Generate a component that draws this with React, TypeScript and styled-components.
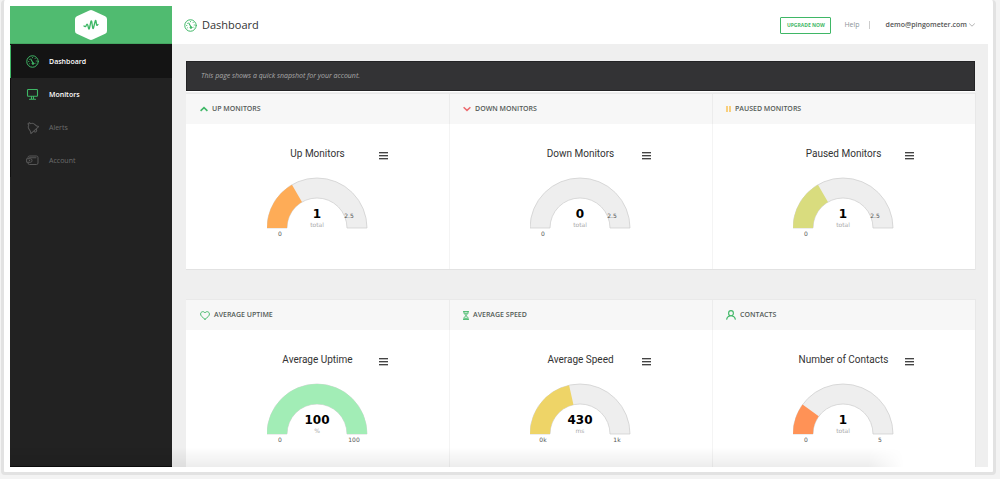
import React from "react";
import styled, { createGlobalStyle } from "styled-components";

const GlobalStyle = createGlobalStyle`
  *, *::before, *::after { box-sizing: border-box; }
  body {
    margin: 0;
    background: #f3f3f3;
    font-family: "Open Sans", "Noto Sans", sans-serif;
    color: #333;
  }
  h1, h2, h3, p, ul { margin: 0; padding: 0; }
  button { font-family: inherit; cursor: pointer; padding: 0; }
  a { color: inherit; text-decoration: none; }
`;

const green = "#3fb766";

const Page = styled.div`
  min-height: 100vh;
  display: flex;
  padding: 0 4px 4px 1px;
`;

const Frame = styled.div`
  flex: 1;
  display: flex;
  background: #fff;
  border: 3px solid #e2e2e2;
  border-top: 0;
  border-radius: 4px;
  padding: 6px 5px 5px 6px;
`;

const Shell = styled.div`
  flex: 1;
  display: flex;
  position: relative;
`;

const BottomShade = styled.div`
  position: absolute;
  left: 0;
  right: 84px;
  bottom: 0;
  height: 20px;
  background: linear-gradient(rgba(0, 0, 0, 0), rgba(0, 0, 0, 0.07));
  mask-image: linear-gradient(to right, #000 96%, transparent);
  pointer-events: none;
`;

const Sidebar = styled.aside`
  flex: 0 0 162px;
  background: #222;
  border-bottom: 1px solid #0c0c0c;
`;

const Brand = styled.a`
  display: flex;
  justify-content: center;
  align-items: center;
  height: 38px;
  background: #50bb70;
  border-bottom: 1px solid #45a862;
`;

const NavList = styled.ul`
  list-style: none;
  padding-top: 1px;
  background: #141414;
  li { background: #222; }
`;

const NavLink = styled.a<{ $state: "active" | "normal" | "muted" }>`
  display: flex;
  align-items: center;
  gap: 10px;
  height: 33px;
  padding-left: 15px;
  border-left: 1px solid ${(p) => (p.$state === "active" ? green : "#111")};
  background: ${(p) => (p.$state === "active" ? "#141414" : "transparent")};
  color: ${(p) => (p.$state === "muted" ? "#6c6c6c" : "#fff")};
  font-size: 7px;
  line-height: 10px;
  font-weight: ${(p) => (p.$state === "muted" ? 400 : 600)};
  svg {
    color: ${(p) => (p.$state === "muted" ? "#585858" : green)};
  }
`;

const Main = styled.div`
  flex: 1;
  min-width: 0;
  display: flex;
  flex-direction: column;
`;

const TopBar = styled.header`
  display: flex;
  align-items: center;
  height: 38px;
  padding: 0 13px 0 12px;
  background: #fff;
`;

const PageTitle = styled.h1`
  display: flex;
  align-items: center;
  gap: 5px;
  margin-right: auto;
  font-size: 11px;
  line-height: 16px;
  font-weight: 400;
  color: #333;
  svg {
    color: ${green};
  }
`;

const UpgradeButton = styled.button`
  height: 17px;
  width: 51px;
  border: 1px solid ${green};
  border-radius: 1px;
  background: #fff;
  color: ${green};
  font-size: 5px;
  line-height: 8px;
  font-weight: 700;
`;

const HelpLink = styled.a`
  margin-left: 13px;
  padding-right: 9px;
  border-right: 1px solid #ccc;
  font-size: 7px;
  line-height: 8px;
  color: #8b9499;
`;

const AccountButton = styled.button`
  display: flex;
  align-items: center;
  gap: 2px;
  margin-left: 16px;
  border: 0;
  background: none;
  color: #555;
  font-size: 6px;
  line-height: 10px;
  font-weight: 700;
  font-size: 7px;
  font-weight: 600;
  svg {
    color: #aaa;
  }
`;

const Content = styled.main`
  flex: 1;
  display: flex;
  flex-direction: column;
  padding: 17px 13px 0 14px;
  background: #efefef;
`;

const Banner = styled.p`
  padding: 0 14px;
  background: #333335;
  border: 1px solid #232325;
  box-shadow: 0 1px 0 #fff;
  font-size: 7px;
  line-height: 28px;
  font-style: italic;
  color: #aaa;
`;

const Panel = styled.section<{ $fill?: boolean }>`
  display: flex;
  flex: ${(p) => (p.$fill ? "1" : "none")};
  margin-top: ${(p) => (p.$fill ? "29px" : "2px")};
  background: #fff;
  border-top: 1px solid #e9e9e9;
  border-bottom: ${(p) => (p.$fill ? "0" : "1px solid #e2e2e2")};
  box-shadow: 1px 0 0 #e8e8e8;
`;

const Card = styled.article`
  flex: 1;
  min-width: 0;
  & + & {
    box-shadow: inset 1px 0 0 #f4f4f4;
  }
`;

const CardHeader = styled.h2`
  display: flex;
  align-items: center;
  gap: 4px;
  height: 30px;
  padding-left: 14px;
  background: rgba(0, 0, 0, 0.032);
  font-size: 7px;
  line-height: 10px;
  font-weight: 600;
  color: #555b58;
`;

const Chart = styled.div<{ $short?: boolean }>`
  display: flex;
  flex-direction: column;
  align-items: center;
  padding: 23px 0 ${(p) => (p.$short ? "8px" : "30px")};
`;

const ChartHeading = styled.div`
  display: grid;
  grid-template-columns: 1fr auto 1fr;
  align-items: center;
  width: 140px;
`;

const ChartTitle = styled.h3`
  grid-column: 2;
  font-family: Roboto, "Noto Sans", sans-serif;
  font-size: 10px;
  line-height: 14px;
  font-weight: 400;
  color: #333;
  white-space: nowrap;
`;

const MenuButton = styled.button`
  justify-self: end;
  display: grid;
  gap: 2px;
  width: 9px;
  margin-top: 3px;
  border: 0;
  background: none;
  span {
    height: 1px;
    background: #444;
    box-shadow: 0 1px 0 #bbb;
  }
`;

const GaugeSvg = styled.svg`
  display: block;
  margin-top: 16px;
  font-family: "DejaVu Sans", sans-serif;
  text-anchor: middle;
`;

const Value = styled.text`
  font-size: 12px;
  font-weight: 700;
  fill: #000;
`;
const Unit = styled.text`
  font-size: 6px;
  fill: #aaa;
`;
const Tick = styled.text`
  font-size: 6px;
  fill: #555;
`;

function arc(f: number) {
  const a = Math.PI * (1 - f);
  const c = Math.cos(a);
  const s = Math.sin(a);
  return `M1 51A50 50 0 0 1 ${51 + 50 * c} ${51 - 50 * s}L${51 + 30 * c} ${51 - 30 * s}A30 30 0 0 0 21 51Z`;
}

interface GaugeData {
  header: string;
  title: string;
  icon: React.ReactNode;
  value: string;
  unit: string;
  min: string;
  max: string;
  maxInside?: boolean;
  fraction: number;
  color: string;
}

function Gauge({ g }: { g: GaugeData }) {
  return (
    <GaugeSvg width="101" height="62" viewBox="1 0 101 62" role="img" aria-label={g.title}>
      <path d={arc(1)} fill="#eee" stroke="#ccc" strokeWidth="0.7" />
      {g.fraction > 0 && <path d={arc(g.fraction)} fill={g.color} />}
      <Value x="51" y="41">{g.value}</Value>
      <Unit x="51" y="50">{g.unit}</Unit>
      <Tick x="14" y="59">{g.min}</Tick>
      <Tick x={g.maxInside ? 83 : 88} y={g.maxInside ? 41 : 59}>{g.max}</Tick>
    </GaugeSvg>
  );
}

function GaugeCard({ g, short }: { g: GaugeData; short?: boolean }) {
  return (
    <Card>
      <CardHeader>{g.icon}{g.header}</CardHeader>
      <Chart $short={short}>
        <ChartHeading>
          <ChartTitle>{g.title}</ChartTitle>
          <MenuButton type="button" aria-label="Chart menu"><span /><span /><span /></MenuButton>
        </ChartHeading>
        <Gauge g={g} />
      </Chart>
    </Card>
  );
}

const stroke = { fill: "none", stroke: "currentColor", strokeLinecap: "round", strokeLinejoin: "round" } as const;

const DashIcon = () => (
  <svg width="13" height="13" viewBox="0 0 26 26" {...stroke} strokeWidth="2">
    <circle cx="13" cy="13" r="11.5" />
    <path d="M9.500 8l4 7" strokeWidth="2.200" />
    <circle cx="14" cy="17" r="1.800" fill="currentColor" />
    <path d="M13 4.800v.7M18.500 6.800l-.4.600M21 12h-.7M5 13h.7M6.500 8.500l.5.400M20 17l-.5-.3M6.500 18l.5-.4" strokeWidth="1.700" />
  </svg>
);
const MonitorIcon = () => (
  <svg width="13" height="13" viewBox="0 0 26 26" {...stroke} strokeWidth="2.200">
    <rect x="3" y="3" width="20" height="13.500" rx="1.500" />
    <path d="M11 17v4M15 17v4M7 22.500h12" />
  </svg>
);
const BellIcon = () => (
  <svg width="13" height="13" viewBox="0 0 26 26" {...stroke} strokeWidth="2">
    <g transform="rotate(-42 13 13)">
      <path d="M11 4.500V1.500h4v3c4 1 5.500 4 5.500 7.500 0 4 1 5.500 3 8H2.500c2-2.500 3-4 3-8 0-3.500 1.500-6.500 5.500-7.500z" />
      <path d="M9.500 20.500q.5 3.500 3.500 3.500t3.500-3.500" />
    </g>
  </svg>
);
const WalletIcon = () => (
  <svg width="13" height="13" viewBox="0 0 26 26" {...stroke} strokeWidth="2">
    <path d="M4 9V7q0-3 3-3h14q3 0 3 3v11q0 3-3 3H7q-3 0-3-3v-1M7 7.500h13" />
    <path d="M2 9.500h7q3 0 3 3.500t-3 3.500H2zM6.500 13h1" />
  </svg>
);

const UpIcon = () => (
  <svg width="8" height="6" viewBox="0 0 8 6" fill="none" stroke={green} strokeWidth="1.6"><path d="M.6 4.800L4 1.600l3.400 3.200" /></svg>
);
const DownIcon = () => (
  <svg width="8" height="6" viewBox="0 0 8 6" fill="none" stroke="#ec6a6e" strokeWidth="1.500"><path d="M.6 1.200L4 4.400l3.400-3.200" /></svg>
);
const PauseIcon = () => (
  <svg width="5" height="6" viewBox="0 0 5 6" fill="#f8cf7d"><path d="M0 0h2v6H0zM3 0H5v6H3z" /></svg>
);
const HeartIcon = () => (
  <svg width="10" height="9" viewBox="0 0 20 18" {...stroke} stroke={green} strokeWidth="1.900">
    <path d="M10 16.500C4 12 1.200 9.500 1.200 6c0-5 6.500-6.500 8.800-2 2.300-4.500 8.800-3 8.800 2 0 3.500-2.800 6-8.800 10.500z" />
  </svg>
);
const HourglassIcon = () => (
  <svg width="6" height="9" viewBox="0 0 12 18" {...stroke} stroke={green} strokeWidth="1.900">
    <path d="M1 1.200h10M1 16.800h10M2 1.500v3L6 9l4-4.500v-3M2 16.500v-3L6 9l4 4.500v3M4 4.500h4M4 14.500h4" />
  </svg>
);
const PersonIcon = () => (
  <svg width="10" height="10" viewBox="0 0 20 20" {...stroke} stroke={green} strokeWidth="2.200">
    <ellipse cx="10" cy="6.500" rx="4.800" ry="5.300" />
    <path d="M1.500 18.500c0-4 2.500-5.500 6-6.500M18.500 18.500c0-4-2.500-5.500-6-6.500" />
  </svg>
);

const monitors: GaugeData[] = [
  { header: "UP MONITORS", title: "Up Monitors", icon: <UpIcon />, value: "1", unit: "total", min: "0", max: "2.5", maxInside: true, fraction: 0.333, color: "#feac57" },
  { header: "DOWN MONITORS", title: "Down Monitors", icon: <DownIcon />, value: "0", unit: "total", min: "0", max: "2.5", maxInside: true, fraction: 0, color: "#eee" },
  { header: "PAUSED MONITORS", title: "Paused Monitors", icon: <PauseIcon />, value: "1", unit: "total", min: "0", max: "2.5", maxInside: true, fraction: 0.333, color: "#d9dc7e" },
];

const stats: GaugeData[] = [
  { header: "AVERAGE UPTIME", title: "Average Uptime", icon: <HeartIcon />, value: "100", unit: "%", min: "0", max: "100", fraction: 1, color: "#a2edb6" },
  { header: "AVERAGE SPEED", title: "Average Speed", icon: <HourglassIcon />, value: "430", unit: "ms", min: "0k", max: "1k", fraction: 0.43, color: "#eed467" },
  { header: "CONTACTS", title: "Number of Contacts", icon: <PersonIcon />, value: "1", unit: "total", min: "0", max: "5", fraction: 0.2, color: "#ff9256" },
];

export default function App() {
  return (
    <Page>
      <GlobalStyle />
      <Frame>
        <Shell>
          <Sidebar>
            <Brand href="#" aria-label="Home">
              <svg width="32" height="30" viewBox="0 0 32 30">
                <path d="M14.300.5q1.700-.9 3.400 0l12.500 5.700q1.800.9 1.800 2.800v12q0 1.900-1.800 2.800l-12.500 5.700q-1.700.9-3.400 0L1.800 23.800Q0 22.900 0 21V9q0-1.900 1.800-2.800z" fill="#fff" />
                <path d="M9 16q1.500 1.500 2.300-.8t1.500 0l.8 3.300q.4 1 .8 0l1.500-7q.4-1 .8 0l1 6.500q.4 1 .8 0l1.700-7q.4-1 .8 0l.6 4q.4 1 1.400-.5" fill="none" stroke={green} strokeWidth="1.300" strokeLinecap="round" />
              </svg>
            </Brand>
            <nav>
              <NavList>
                <li><NavLink href="#" $state="active"><DashIcon />Dashboard</NavLink></li>
                <li><NavLink href="#" $state="normal"><MonitorIcon />Monitors</NavLink></li>
                <li><NavLink href="#" $state="muted"><BellIcon />Alerts</NavLink></li>
                <li><NavLink href="#" $state="muted"><WalletIcon />Account</NavLink></li>
              </NavList>
            </nav>
          </Sidebar>
          <Main>
            <TopBar>
              <PageTitle><DashIcon />Dashboard</PageTitle>
              <UpgradeButton type="button">UPGRADE NOW</UpgradeButton>
              <HelpLink href="#">Help</HelpLink>
              <AccountButton type="button">
                demo@pingometer.com
                <svg width="6" height="4" viewBox="0 0 6 4" {...stroke} strokeWidth="0.9"><path d="M.5.800L3 3.200 5.500.800" /></svg>
              </AccountButton>
            </TopBar>
            <Content>
              <Banner>This page shows a quick snapshot for your account.</Banner>
              <Panel>{monitors.map((g) => <GaugeCard key={g.title} g={g} />)}</Panel>
              <Panel $fill>{stats.map((g) => <GaugeCard key={g.title} g={g} short />)}</Panel>
            </Content>
          </Main>
          <BottomShade />
        </Shell>
      </Frame>
    </Page>
  );
}
